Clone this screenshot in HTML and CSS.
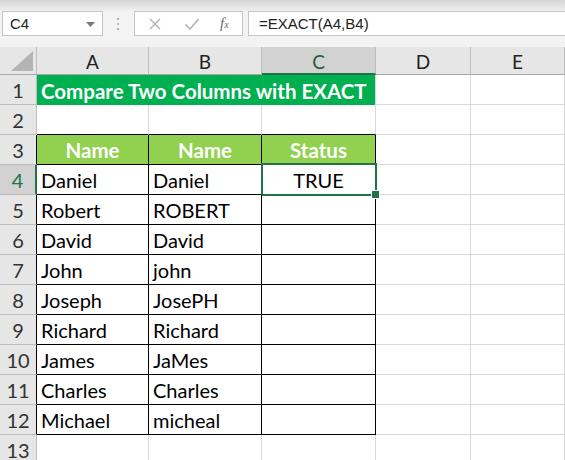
FILE: index.html
```html
<!DOCTYPE html>
<html>
<head>
<meta charset="utf-8">
<link rel="stylesheet" href="styles.css">
</head>
<body>
<div class="app">
  <div class="topstrip"></div>
  <div class="fbar">
    <div class="namebox">
      <span class="ref">C4</span>
      <svg class="dd" width="9" height="5" viewBox="0 0 9 5"><path d="M0 0H9L4.5 5Z" fill="#777"/></svg>
    </div>
    <div class="grip">
      <svg width="3" height="12" viewBox="0 0 3 12"><rect x="0" y="0" width="2" height="2" fill="#b5b5b5"/><rect x="0" y="5" width="2" height="2" fill="#b5b5b5"/><rect x="0" y="10" width="2" height="2" fill="#b5b5b5"/></svg>
    </div>
    <div class="fbuttons">
      <svg class="btn" width="14" height="14" viewBox="0 0 14 14"><path d="M2 2L12 12M12 2L2 12" stroke="#b3b3b3" stroke-width="1.4" fill="none"/></svg>
      <svg class="btn" width="16" height="14" viewBox="0 0 16 14"><path d="M1.5 7.5L6 12L14.5 2" stroke="#b3b3b3" stroke-width="1.6" fill="none"/></svg>
      <span class="fx">f<sub>x</sub></span>
    </div>
    <div class="finput">=EXACT(A4,B4)</div>
  </div>
  <div class="sheet">
    <div class="corner"><svg width="22" height="20" viewBox="0 0 22 20"><path d="M22 0V20H0Z" fill="#b4b4b4"/></svg></div>
    <div class="ch">A</div>
    <div class="ch">B</div>
    <div class="ch sel">C</div>
    <div class="ch">D</div>
    <div class="ch">E</div>

    <div class="rh">1</div>
    <div class="title">Compare Two Columns with EXACT</div>
    <div class="c"></div>
    <div class="c"></div>

    <div class="rh">2</div>
    <div class="c top"></div>
    <div class="c top"></div>
    <div class="c top"></div>
    <div class="c"></div>
    <div class="c"></div>

    <div class="rh tb">3</div>
    <div class="c t th">Name</div>
    <div class="c t th">Name</div>
    <div class="c t th">Status</div>
    <div class="c"></div>
    <div class="c"></div>

    <div class="rh tb rsel">4</div>
    <div class="c t">Daniel</div>
    <div class="c t">Daniel</div>
    <div class="c t mid active">TRUE</div>
    <div class="c"></div>
    <div class="c"></div>

    <div class="rh tb">5</div>
    <div class="c t">Robert</div>
    <div class="c t">ROBERT</div>
    <div class="c t"></div>
    <div class="c"></div>
    <div class="c"></div>

    <div class="rh tb">6</div>
    <div class="c t">David</div>
    <div class="c t">David</div>
    <div class="c t"></div>
    <div class="c"></div>
    <div class="c"></div>

    <div class="rh tb">7</div>
    <div class="c t">John</div>
    <div class="c t">john</div>
    <div class="c t"></div>
    <div class="c"></div>
    <div class="c"></div>

    <div class="rh tb">8</div>
    <div class="c t">Joseph</div>
    <div class="c t">JosePH</div>
    <div class="c t"></div>
    <div class="c"></div>
    <div class="c"></div>

    <div class="rh tb">9</div>
    <div class="c t">Richard</div>
    <div class="c t">Richard</div>
    <div class="c t"></div>
    <div class="c"></div>
    <div class="c"></div>

    <div class="rh tb">10</div>
    <div class="c t">James</div>
    <div class="c t">JaMes</div>
    <div class="c t"></div>
    <div class="c"></div>
    <div class="c"></div>

    <div class="rh tb">11</div>
    <div class="c t">Charles</div>
    <div class="c t">Charles</div>
    <div class="c t"></div>
    <div class="c"></div>
    <div class="c"></div>

    <div class="rh tb">12</div>
    <div class="c t">Michael</div>
    <div class="c t">micheal</div>
    <div class="c t"></div>
    <div class="c"></div>
    <div class="c"></div>

    <div class="rh">13</div>
    <div class="c"></div>
    <div class="c"></div>
    <div class="c"></div>
    <div class="c"></div>
    <div class="c"></div>
  </div>
</div>
</body>
</html>
```

FILE: styles.css
```css
* { box-sizing: border-box; }
html, body { margin: 0; padding: 0; }
body {
  width: 565px;
  height: 460px;
  overflow: hidden;
  background: #ffffff;
  font-family: Lato, "Open Sans", "Liberation Sans", sans-serif;
  color: #000;
}
.app { display: flex; flex-direction: column; width: 565px; }
.topstrip {
  height: 11px;
  background: linear-gradient(#d6d6d6, #efefef);
}
.fbar {
  height: 36px;
  background: #f3f3f3;
  display: flex;
  align-items: flex-start;
  padding-left: 2px;
}
.namebox {
  width: 101px;
  height: 25px;
  background: #fff;
  border: 1px solid #c6c6c6;
  display: flex;
  align-items: center;
  justify-content: space-between;
  padding: 0 7px 0 7px;
  font-size: 15px;
  color: #222;
}
.ref { font-family: "Liberation Sans", Arial, sans-serif; font-size: 15px; }
.dd { margin-top: 1px; }
.grip {
  width: 31px;
  height: 25px;
  display: flex;
  align-items: center;
  justify-content: center;
}
.fbuttons {
  width: 109px;
  height: 25px;
  background: #fff;
  border: 1px solid #c6c6c6;
  display: flex;
  align-items: center;
  padding-left: 13px;
  gap: 22px;
}
.fx {
  font-family: "Liberation Serif", "DejaVu Serif", serif;
  font-style: italic;
  font-size: 15px;
  color: #666;
  margin-left: -2px;
}
.fx sub { font-size: 10px; vertical-align: 0; }
.finput {
  margin-left: 5px;
  flex: 1;
  height: 25px;
  background: #fff;
  border: 1px solid #c6c6c6;
  border-right: none;
  display: flex;
  align-items: center;
  padding-left: 10px;
  font-family: "Liberation Sans", Arial, sans-serif;
  font-size: 15px;
  color: #222;
}
.sheet {
  display: grid;
  grid-template-columns: 37px 112px 113px 114px 95px 94px;
  grid-template-rows: 28px repeat(13, 30px);
}
.corner {
  background: #e6e6e6;
  border-right: 1px solid #bdbdbd;
  border-bottom: 1px solid #a6a6a6;
  display: flex;
  align-items: flex-end;
  justify-content: flex-end;
  padding: 0 3px 3px 0;
}
.ch {
  background: #e6e6e6;
  border-right: 1px solid #bdbdbd;
  border-bottom: 1px solid #a6a6a6;
  display: flex;
  align-items: center;
  justify-content: center;
  padding-top: 2px;
  font-size: 19px;
  color: #222;
}
.ch.sel {
  background: #d2d2d2;
  border-bottom: 2px solid #217346;
  color: #215f3a;
}
.rh {
  background: #e6e6e6;
  border-right: 1px solid #bdbdbd;
  border-bottom: 1px solid #bdbdbd;
  display: flex;
  align-items: flex-end;
  justify-content: center;
  padding-bottom: 2px;
  font-size: 20px;
  color: #333;
}
.rh.tb { border-right-color: #000; }
.rh.rsel {
  background: #d2d2d2;
  border-right: 2px solid #217346;
  color: #217346;
}
.c {
  border-right: 1px solid #d9d9d9;
  border-bottom: 1px solid #d9d9d9;
  display: flex;
  align-items: flex-end;
  padding: 0 0 2px 4px;
  font-size: 20px;
  position: relative;
}
.c.top { border-bottom-color: #000; }
.c.t {
  border-right-color: #000;
  border-bottom-color: #000;
}
.title {
  grid-column: span 3;
  background: #00b050;
  border-right: 1px solid #d9d9d9;
  color: #fff;
  font-weight: 700;
  font-size: 20.5px;
  display: flex;
  align-items: flex-end;
  padding: 0 0 2px 4px;
}
.th {
  background: #92d050;
  color: #fff;
  font-weight: 700;
  font-size: 20.5px;
  justify-content: center;
  padding-left: 0;
}
.mid { justify-content: center; padding-left: 0; }
.active::after {
  content: "";
  position: absolute;
  top: -2px;
  left: -1px;
  right: -2px;
  bottom: -2px;
  border: 2px solid #217346;
}
.active::before {
  content: "";
  position: absolute;
  right: -5px;
  bottom: -5px;
  width: 7px;
  height: 7px;
  background: #217346;
  border: 1px solid #fff;
  z-index: 2;
}
```
